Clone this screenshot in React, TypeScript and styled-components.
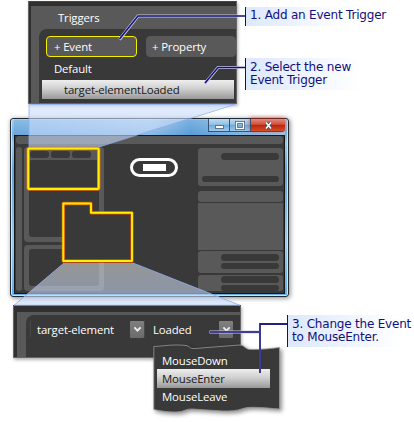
import React from "react";
import styled, { createGlobalStyle } from "styled-components";

const GlobalStyle = createGlobalStyle`
  * { box-sizing: border-box; }
  body { margin: 0; background: #fff; }
`;

const DARK = "#393939";
const GRAY = "#595959";
const NAVY = "#10107c";

const Figure = styled.main`
  position: relative;
  width: 414px;
  height: 422px;
  overflow: hidden;
  display: flex;
  flex-direction: column;
  align-items: flex-start;
  font: 11.4px/17px "Open Sans", "Noto Sans", sans-serif;
  letter-spacing: -0.15px;
  color: #fff;
`;

/* Enlarged detail panels */
const DetailPanel = styled.section<{ $w: number; $h: number; $margin: string; $pad: string }>`
  width: ${(p) => p.$w}px;
  height: ${(p) => p.$h}px;
  margin: ${(p) => p.$margin};
  padding: ${(p) => p.$pad};
  flex: none;
  background: #303030;
  border: 1px solid #666;
  border-top-color: #444;
  box-shadow: 1px 2px 3px rgba(0, 0, 0, 0.3);
`;

const PanelSurface = styled.div`
  height: 100%;
  display: flex;
  flex-direction: column;
  background: ${GRAY};
`;

const PanelTitle = styled.div`
  height: 23px;
  padding: 3px 0 0 27px;
`;

const PanelBody = styled.div<{ $ml: number; $mt?: number }>`
  flex: 1;
  min-height: 0;
  margin: ${(p) => p.$mt ?? 0}px 0 0 ${(p) => p.$ml}px;
  background: ${DARK};
  border-top-left-radius: 8px;
`;

const ButtonRow = styled.div`
  display: flex;
  gap: 9px;
  padding: 7px 0 0 7px;
`;

const TriggerButton = styled.button<{ $active?: boolean }>`
  width: ${(p) => (p.$active ? 91 : 90)}px;
  height: 21px;
  flex: none;
  padding: 0 0 1px ${(p) => (p.$active ? 7 : 5)}px;
  text-align: left;
  font: inherit;
  letter-spacing: inherit;
  color: #fff;
  background: ${GRAY};
  border: 1px solid ${(p) => (p.$active ? "#f4f000" : GRAY)};
  border-radius: 4px;
`;

const Label = styled.span`
  white-space: nowrap;
`;

const DefaultRow = styled.div`
  height: 23px;
  padding: 3px 0 0 15px;
`;

const SelectedRow = styled.div<{ $w: number; $pl: number; $ml: number }>`
  width: ${(p) => p.$w}px;
  height: 19px;
  margin-left: ${(p) => p.$ml}px;
  padding: 1px 0 0 ${(p) => p.$pl}px;
  color: #181818;
  background: linear-gradient(#eee, #d0d0d0 45%, #999);
`;

/* Application window */
const AppWindow = styled.section`
  width: 279px;
  height: 179px;
  margin: 14px 0 0 10px;
  padding: 0 3px 2px;
  flex: none;
  display: flex;
  flex-direction: column;
  border: 1px solid #202a33;
  border-radius: 3px;
  background: linear-gradient(#a8cdeb, #75aee0 9%, #9cc9ed 14%, #65a5da 30%, #9acdf2 70%, #63aee9);
  box-shadow: inset 0 0 0 1px #c5e5fb, 1px 1px 5px rgba(0, 0, 0, 0.5);
`;

const TitleBar = styled.header`
  height: 16px;
  flex: none;
  display: flex;
  justify-content: flex-end;
  background: linear-gradient(90deg, rgba(70,145,210,.3), rgba(255,255,255,.15) 50%, rgba(40,125,200,.35) 65%, rgba(255,255,255,.3));
`;

const CaptionButton = styled.button<{ $close?: boolean }>`
  width: ${(p) => (p.$close ? 35 : 21)}px;
  height: 13px;
  padding: 0;
  display: grid;
  place-items: center;
  border: 1px solid #37536d;
  border-width: 0 0 1px 1px;
  border-radius: 0 0 ${(p) => (p.$close ? 3 : 0)}px 0;
  background: ${(p) =>
    p.$close
      ? "linear-gradient(#e38a7b, #d2503c 45%, #b92510 50%, #d44c25)"
      : "linear-gradient(#bbdaf2, #94c2e8 45%, #6caade 50%, #9dcaed)"};
  box-shadow: ${(p) => (p.$close ? "0 -1px 4px rgba(220, 40, 20, 0.7)" : "none")};
`;

const Workspace = styled.div`
  flex: 1;
  min-height: 0;
  padding: 0 1px 3px;
  display: grid;
  grid-template: 8px 144px / 6px 80px 1fr 85px;
  column-gap: 2px;
  row-gap: 3px;
  border: 1px solid #181818;
  background: ${DARK};
`;

const Toolbar = styled.div`
  grid-column: 1 / -1;
  border-radius: 3px;
  background: ${GRAY};
`;

const ToolStrip = styled.div`
  border-radius: 3px;
  background: ${GRAY};
`;

const LeftColumn = styled.div`
  display: grid;
  grid-template-rows: 95px 46px;
  gap: 3px;
`;

const Frame = styled.div`
  display: flex;
  flex-direction: column;
  padding: 4px 5px 5px;
  border-radius: 4px;
  background: ${GRAY};
`;

const FrameBody = styled.div`
  flex: 1;
  border-radius: 3px;
  background: ${DARK};
`;

const TabRow = styled.div`
  display: flex;
  gap: 2px;
  height: 9px;
  padding-left: 1px;
`;

const Tab = styled.div`
  width: 19px;
  height: 7px;
  border-radius: 3px;
  background: ${DARK};
`;

const Artboard = styled.div`
  padding: 11px 0 0 24px;
`;

const Toggle = styled.div`
  width: 48px;
  height: 19px;
  display: grid;
  place-items: center;
  border: 3px solid #fff;
  border-radius: 10px;
`;

const ToggleCore = styled.div`
  width: 23px;
  height: 7px;
  background: #fff;
`;

const RightColumn = styled.div`
  display: flex;
  flex-direction: column;
  padding-top: 1px;
`;

const PropertyGroup = styled.div<{ $h: number; $mb: number; $pt?: number; $gap?: number; $square?: boolean }>`
  height: ${(p) => p.$h}px;
  flex: none;
  margin-bottom: ${(p) => p.$mb}px;
  padding: ${(p) => p.$pt ?? 0}px 4px 0 0;
  display: flex;
  flex-direction: column;
  align-items: flex-end;
  gap: ${(p) => p.$gap ?? 2}px;
  border-radius: ${(p) => (p.$square ? 0 : 3)}px;
  background: ${GRAY};
`;

const Field = styled.div<{ $wide?: boolean }>`
  width: ${(p) => (p.$wide ? 77 : 58)}px;
  height: 6.5px;
  flex: none;
  border-radius: 4px;
  background: ${DARK};
`;

/* Event picker */
const PickerRow = styled.div`
  display: flex;
  align-items: center;
  padding: 5px 0 0 4px;
`;

const Picker = styled.div<{ $w: number; $pl: number }>`
  width: ${(p) => p.$w}px;
  height: 18px;
  padding-left: ${(p) => p.$pl}px;
  display: flex;
  align-items: center;
  justify-content: space-between;
  border-left: 1px solid #484848;
  border-radius: 2px;
`;

const Chevron = styled.span`
  width: 14px;
  height: 17px;
  display: grid;
  place-items: center;
  border-radius: 1px;
  background: linear-gradient(#808080, #6a6a6a);
`;

const Menu = styled.div`
  position: absolute;
  left: 153px;
  top: 342px;
  width: 128px;
  height: 72px;
`;

const MenuShape = styled.svg`
  position: absolute;
  inset: 0;
  overflow: visible;
  filter: drop-shadow(2px 2px 2px rgba(0, 0, 0, 0.45));
`;

const MenuItems = styled.div`
  position: relative;
  padding-top: 10px;
`;

const MenuItem = styled.div`
  height: 17px;
  padding-left: 9px;
`;

/* Annotations laid over the figure */
const Overlay = styled.svg`
  position: absolute;
  inset: 0;
  pointer-events: none;
`;

const Callout = styled.aside<{ $x: number; $y: number; $w: number; $h: number }>`
  position: absolute;
  left: ${(p) => p.$x}px;
  top: ${(p) => p.$y}px;
  width: ${(p) => p.$w}px;
  height: ${(p) => p.$h}px;
  padding: ${(p) => (p.$h > 20 ? 3 : 2)}px 0 0 4px;
  border-left: 1px solid ${NAVY};
  background: linear-gradient(90deg, #dce8fc, #fff);
  color: ${NAVY};
  font: 12px/13.4px "DejaVu Sans", sans-serif;
  letter-spacing: -0.2px;
  white-space: nowrap;
`;

const ArrowGlyph = () => (
  <Chevron>
    <svg width="9" height="7" viewBox="0 0 9 7" fill="none" stroke="#eee" strokeWidth="1.8">
      <path d="M1.4 1.4 4.5 4.7 7.6 1.4" />
    </svg>
  </Chevron>
);

export default function App() {
  return (
    <>
      <GlobalStyle />
      <Figure>
        <DetailPanel $w={209} $h={103} $margin="1px 0 0 28px" $pad="4px 0 0 2px">
          <PanelSurface>
            <PanelTitle><Label>Triggers</Label></PanelTitle>
            <PanelBody $ml={8}>
              <ButtonRow>
                <TriggerButton $active><Label>+ Event</Label></TriggerButton>
                <TriggerButton><Label>+ Property</Label></TriggerButton>
              </ButtonRow>
              <DefaultRow><Label>Default</Label></DefaultRow>
              <SelectedRow $w={192} $pl={22} $ml={3}><Label>target-elementLoaded</Label></SelectedRow>
            </PanelBody>
          </PanelSurface>
        </DetailPanel>

        <AppWindow>
          <TitleBar>
            <CaptionButton>
              <svg width="9" height="8"><rect x=".5" y="4.5" width="8" height="3" fill="#fff" stroke="#607487" /></svg>
            </CaptionButton>
            <CaptionButton>
              <svg width="10" height="9" fill="none">
                <rect x="1.5" y="1.5" width="7" height="6" stroke="#506477" strokeWidth="3" />
                <rect x="1.5" y="1.5" width="7" height="6" stroke="#fff" strokeWidth="1.3" />
              </svg>
            </CaptionButton>
            <CaptionButton $close>
              <svg width="9" height="9" fill="none">
                <path d="M2 1.5 7 7.5M7 1.5 2 7.5" stroke="#49515c" strokeWidth="3.2" />
                <path d="M2 1.5 7 7.5M7 1.5 2 7.5" stroke="#fff" strokeWidth="1.6" />
              </svg>
            </CaptionButton>
          </TitleBar>
          <Workspace>
            <Toolbar />
            <ToolStrip />
            <LeftColumn>
              <Frame>
                <TabRow><Tab /><Tab /><Tab /></TabRow>
                <FrameBody />
              </Frame>
              <Frame><FrameBody /></Frame>
            </LeftColumn>
            <Artboard>
              <Toggle><ToggleCore /></Toggle>
            </Artboard>
            <RightColumn>
              <PropertyGroup $h={38} $mb={5} $pt={5} $gap={16}><Field /><Field $wide /></PropertyGroup>
              <PropertyGroup $h={11} $mb={1} />
              <PropertyGroup $h={47} $mb={1} $square />
              <PropertyGroup $h={22} $mb={2} $pt={3}><Field /><Field /></PropertyGroup>
              <PropertyGroup $h={16} $mb={0} $pt={1}><Field /><Field /></PropertyGroup>
            </RightColumn>
          </Workspace>
        </AppWindow>

        <DetailPanel $w={228} $h={53} $margin="8px 0 0 13px" $pad="6px 0 0 3px">
          <PanelSurface>
            <PanelBody $ml={9} $mt={3}>
              <PickerRow>
                <Picker $w={114} $pl={6}><Label>target-element</Label><ArrowGlyph /></Picker>
                <Picker $w={89} $pl={8}><Label>Loaded</Label><ArrowGlyph /></Picker>
              </PickerRow>
            </PanelBody>
          </PanelSurface>
        </DetailPanel>

        <Overlay width="414" height="422" fill="none">
          <defs>
            <linearGradient id="beam" x1="0" y1="0" x2="0" y2="1">
              <stop stopColor="#d3d3d3" stopOpacity=".6" />
              <stop offset=".65" stopColor="#c4d3ef" stopOpacity=".6" />
              <stop offset="1" stopColor="#c5dafb" stopOpacity=".62" />
            </linearGradient>
          </defs>
          <path d="M29 104H235L99 147H29Z" fill="#c8dafa" fillOpacity=".6" />
          <path d="M29 147V104.5H235L99 147" stroke="#8cabef" strokeOpacity=".75" />
          <path d="M64 263H133L240 305H14Z" fill="url(#beam)" />
          <path d="M64 263 14 305.3H240L133 263" stroke="#8cabef" strokeOpacity=".8" />
          <g strokeLinejoin="round">
            <rect x="28.2" y="148.5" width="70.5" height="40.5" rx="1" stroke="#e46b08" strokeWidth="3.4" />
            <rect x="28.2" y="148.5" width="70.5" height="40.5" rx="1" stroke="#fff000" strokeWidth="1.9" />
            <path d="M63.3 203.5H91V212.8H132V261H63.3Z" fill={DARK} stroke="#d64c08" strokeWidth="3.3" />
            <path d="M63.3 203.5H91V212.8H132V261H63.3Z" stroke="#fff000" strokeWidth="1.9" />
          </g>
        </Overlay>

        <Menu>
          <MenuShape width="128" height="72">
            <path
              d="M.8 4.5C12 4 20 2 33 3.5C37 4 36 7 42 6.5L86 3C93 3 91 8 99 7.5C109 7.5 118 6.5 126.500 5.500V67C113 66 97 64 90 66.500C84 69 77 69 70 69L39 67C31 67 32 70 22 70C14 70 8 69 .8 67.500Z"
              fill={DARK}
              stroke="#999"
              strokeWidth=".8"
            />
          </MenuShape>
          <MenuItems>
            <MenuItem><Label>MouseDown</Label></MenuItem>
            <SelectedRow $w={113} $pl={5} $ml={4}><Label>MouseEnter</Label></SelectedRow>
            <MenuItem><Label>MouseLeave</Label></MenuItem>
          </MenuItems>
        </Menu>

        <Callout $x={245} $y={7} $w={102} $h={19}>1. Add an Event Trigger</Callout>
        <Callout $x={245} $y={58} $w={115} $h={32}>2. Select the new<br />Event Trigger</Callout>
        <Callout $x={287} $y={315} $w={115} $h={32}>3. Change the Event<br />to MouseEnter.</Callout>

        <Overlay width="414" height="422" fill="none">
          <path d="M119.500 39.500 138 16H237M205 83.500 218 67.500H237" stroke="#c9c9df" strokeWidth="3" />
          <path d="M119.500 39 138 16H245M205 83 218 67.500H245" stroke={NAVY} strokeWidth="1.5" />
          <path d="M209.500 332H259" stroke="#c9c9df" strokeWidth="3" />
          <path d="M210 332H259" stroke={NAVY} strokeWidth="1.4" />
          <path d="M287 324H260V373" stroke="#3b3b93" strokeWidth="2" />
          <path d="M287 324H260" stroke={NAVY} strokeWidth="1.2" />
        </Overlay>
      </Figure>
    </>
  );
}
